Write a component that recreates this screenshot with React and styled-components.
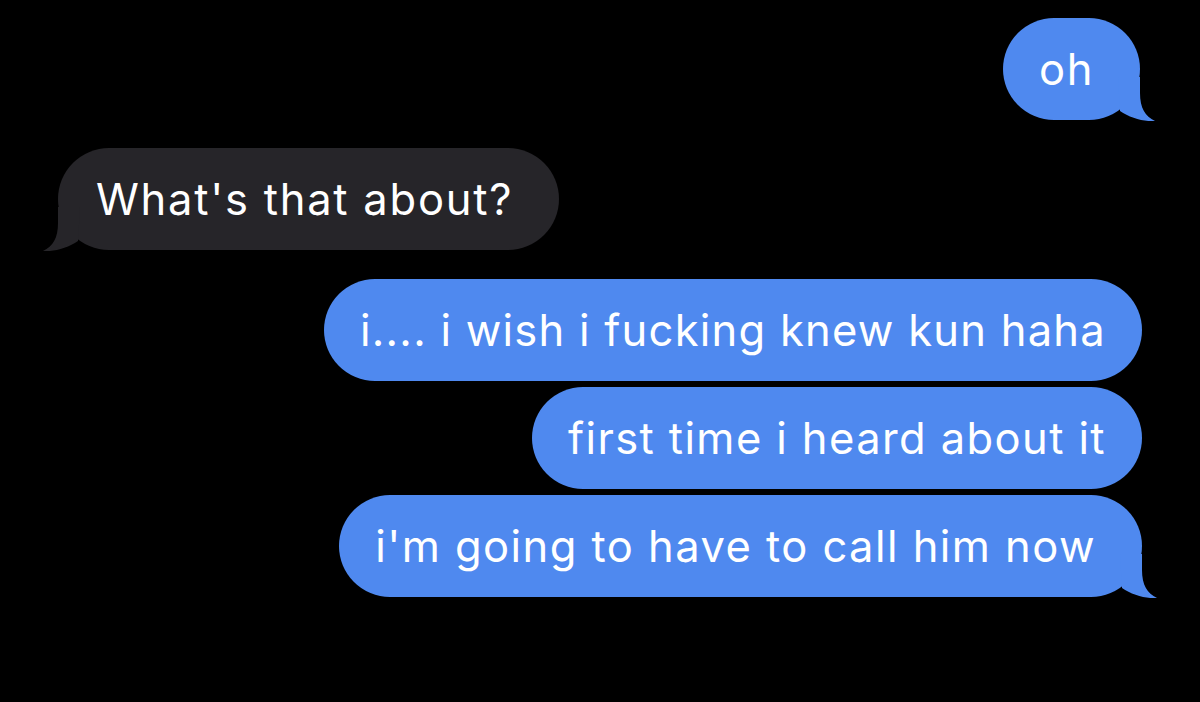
import React from "react";
import styled, { createGlobalStyle } from "styled-components";

const GlobalStyle = createGlobalStyle`
  html, body {
    margin: 0;
    padding: 0;
    background: #000;
  }
  body {
    font-family: Inter, "Liberation Sans", Arial, sans-serif;
    -webkit-font-smoothing: antialiased;
  }
`;

const Thread = styled.div`
  display: flex;
  flex-direction: column;
  width: 1200px;
  height: 702px;
  padding: 18px 58px 0;
  box-sizing: border-box;
  background: #000;
  overflow: hidden;
`;

const Row = styled.div`
  display: flex;
  justify-content: ${(p) => (p.$sent ? "flex-end" : "flex-start")};
  margin-top: ${(p) => p.$gap || 0}px;
  padding-right: ${(p) => p.$inset || 0}px;
`;

const Bubble = styled.div`
  position: relative;
  height: 102px;
  box-sizing: border-box;
  padding: 25px ${(p) => p.$padR || 36}px 25px ${(p) => p.$padL || 36}px;
  border-radius: 51px;
  background: ${(p) => (p.$sent ? "#4f89ef" : "#262529")};
  color: #fff;
  font-size: 43.5px;
  line-height: 52px;
  letter-spacing: ${(p) => p.$tracking || 1.6}px;
  white-space: nowrap;
`;

const Tail = styled.svg`
  position: absolute;
  bottom: -1px;
  width: 38px;
  height: 44px;
  ${(p) =>
    p.$left
      ? "left: -16px; transform: scaleX(-1);"
      : "right: -16px;"}
`;

const BubbleTail = ({ color, left }) => (
  <Tail $left={left} viewBox="0 0 38 44">
    <path
      d="M22 0 L22 16 C22 31 27 39 37 44 C27 45 12 41 2 34 L0 0 Z"
      fill={color}
    />
  </Tail>
);

const BLUE = "#4f89ef";
const GRAY = "#262529";

const messages = [
  { text: "oh", sent: true, tail: true, gap: 0, inset: 2 },
  { text: "What's that about?", sent: false, tail: true, gap: 28, tracking: 1.75 },
  { text: "i.... i wish i fucking knew kun haha", sent: true, gap: 29, tracking: 1.25 },
  { text: "first time i heard about it", sent: true, gap: 6, tracking: 1.4 },
  { text: "i'm going to have to call him now", sent: true, tail: true, gap: 6, tracking: 1.45 },
];

export default function App() {
  return (
    <>
      <GlobalStyle />
      <Thread>
        {messages.map((m, i) => (
          <Row key={i} $sent={m.sent} $gap={m.gap} $inset={m.inset}>
            <Bubble
              $sent={m.sent}
              $tracking={m.tracking}
              $padL={m.tail && !m.sent ? 38 : 36}
              $padR={m.tail ? 46 : 36}
            >
              {m.text}
              {m.tail && (
                <BubbleTail color={m.sent ? BLUE : GRAY} left={!m.sent} />
              )}
            </Bubble>
          </Row>
        ))}
      </Thread>
    </>
  );
}
